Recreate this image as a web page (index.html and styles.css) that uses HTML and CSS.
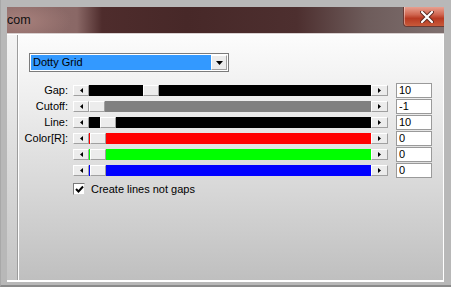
FILE: index.html
```html
<!DOCTYPE html>
<html lang="en">
<head>
    <meta charset="UTF-8">
    <title>Dotty Grid</title>
    <link rel="stylesheet" href="styles.css">
</head>
<body>
    <div class="window">
        <div class="titlebar">
            <span class="title">com</span>
            <div class="close-btn">
                <svg width="14" height="12" viewBox="0 0 14 12">
                    <path d="M2 1 L12 11 M12 1 L2 11" stroke="#5a2a20" stroke-width="4" stroke-linecap="round"/>
                    <path d="M2 1 L12 11 M12 1 L2 11" stroke="#fff" stroke-width="2.2" stroke-linecap="round"/>
                </svg>
            </div>
        </div>
        <div class="client">
            <div class="side-strip"></div>
            <div class="panel">
                <div class="combo">
                    <span class="combo-text">Dotty Grid</span>
                    <span class="combo-arrow">
                        <svg width="7" height="4" viewBox="0 0 7 4"><polygon points="0,0 7,0 3.5,4" fill="#000"/></svg>
                    </span>
                </div>

                <div class="rows">
                    <div class="row">
                        <span class="row-label">Gap:</span>
                        <div class="scrollbar">
                            <span class="sb-btn sb-left"><svg width="3" height="5" viewBox="0 0 3 5"><polygon points="3,0 3,5 0,2.5" fill="#000"/></svg></span>
                            <div class="sb-track black">
                                <span class="sb-before" style="width: 54px"></span>
                                <span class="sb-thumb"></span>
                            </div>
                            <span class="sb-btn sb-right"><svg width="3" height="5" viewBox="0 0 3 5"><polygon points="0,0 0,5 3,2.5" fill="#000"/></svg></span>
                        </div>
                        <input class="value-box" type="text" value="10">
                    </div>
                    <div class="row">
                        <span class="row-label">Cutoff:</span>
                        <div class="scrollbar">
                            <span class="sb-btn sb-left"><svg width="3" height="5" viewBox="0 0 3 5"><polygon points="3,0 3,5 0,2.5" fill="#000"/></svg></span>
                            <div class="sb-track grey">
                                <span class="sb-before" style="width: 0px"></span>
                                <span class="sb-thumb"></span>
                            </div>
                            <span class="sb-btn sb-right"><svg width="3" height="5" viewBox="0 0 3 5"><polygon points="0,0 0,5 3,2.5" fill="#000"/></svg></span>
                        </div>
                        <input class="value-box" type="text" value="-1">
                    </div>
                    <div class="row">
                        <span class="row-label">Line:</span>
                        <div class="scrollbar">
                            <span class="sb-btn sb-left"><svg width="3" height="5" viewBox="0 0 3 5"><polygon points="3,0 3,5 0,2.5" fill="#000"/></svg></span>
                            <div class="sb-track black">
                                <span class="sb-before" style="width: 11px"></span>
                                <span class="sb-thumb"></span>
                            </div>
                            <span class="sb-btn sb-right"><svg width="3" height="5" viewBox="0 0 3 5"><polygon points="0,0 0,5 3,2.5" fill="#000"/></svg></span>
                        </div>
                        <input class="value-box" type="text" value="10">
                    </div>
                    <div class="row">
                        <span class="row-label">Color[R]:</span>
                        <div class="scrollbar">
                            <span class="sb-btn sb-left"><svg width="3" height="5" viewBox="0 0 3 5"><polygon points="3,0 3,5 0,2.5" fill="#000"/></svg></span>
                            <div class="sb-track red">
                                <span class="sb-before" style="width: 1px"></span>
                                <span class="sb-thumb"></span>
                            </div>
                            <span class="sb-btn sb-right"><svg width="3" height="5" viewBox="0 0 3 5"><polygon points="0,0 0,5 3,2.5" fill="#000"/></svg></span>
                        </div>
                        <input class="value-box" type="text" value="0">
                    </div>
                    <div class="row">
                        <span class="row-label"></span>
                        <div class="scrollbar">
                            <span class="sb-btn sb-left"><svg width="3" height="5" viewBox="0 0 3 5"><polygon points="3,0 3,5 0,2.5" fill="#000"/></svg></span>
                            <div class="sb-track green">
                                <span class="sb-before" style="width: 1px"></span>
                                <span class="sb-thumb"></span>
                            </div>
                            <span class="sb-btn sb-right"><svg width="3" height="5" viewBox="0 0 3 5"><polygon points="0,0 0,5 3,2.5" fill="#000"/></svg></span>
                        </div>
                        <input class="value-box" type="text" value="0">
                    </div>
                    <div class="row">
                        <span class="row-label"></span>
                        <div class="scrollbar">
                            <span class="sb-btn sb-left"><svg width="3" height="5" viewBox="0 0 3 5"><polygon points="3,0 3,5 0,2.5" fill="#000"/></svg></span>
                            <div class="sb-track blue">
                                <span class="sb-before" style="width: 1px"></span>
                                <span class="sb-thumb"></span>
                            </div>
                            <span class="sb-btn sb-right"><svg width="3" height="5" viewBox="0 0 3 5"><polygon points="0,0 0,5 3,2.5" fill="#000"/></svg></span>
                        </div>
                        <input class="value-box" type="text" value="0">
                    </div>
                </div>

                <div class="check-row">
                    <span class="check-box">
                        <svg width="9" height="9" viewBox="0 0 9 9"><path d="M1 4 L3.5 6.5 L8 1.5" stroke="#000" stroke-width="2" fill="none"/></svg>
                    </span>
                    <span class="check-label">Create lines not gaps</span>
                </div>
            </div>
        </div>
    </div>
</body>
</html>
```

FILE: styles.css
```css
* {
    margin: 0;
    padding: 0;
    box-sizing: border-box;
}

body {
    width: 451px;
    height: 287px;
    overflow: hidden;
    font-family: "Liberation Sans", Arial, sans-serif;
    font-size: 11px;
    color: #000;
}

.window {
    width: 451px;
    height: 287px;
    background: #b8b8b8;
    border-left: 1px solid #a8a8a8;
    border-bottom: 2px solid #8a8a8a;
    padding: 7px 7px 3px 6px;
    display: flex;
    flex-direction: column;
}

/* title bar */
.titlebar {
    height: 27px;
    display: flex;
    align-items: flex-start;
    justify-content: space-between;
    background:
        radial-gradient(ellipse 50px 22px at 14px 14px, rgba(170, 130, 125, 0.9), rgba(170, 130, 125, 0) 100%),
        linear-gradient(to right, #8c6b69 0px, #8a6866 70px, #4e2c2c 95px, #472828 180px, #4d2f2f 290px, #6e5c5b 360px, #7d6e6d 430px);
    border-bottom: 1px solid #d8d0d0;
    overflow: hidden;
}
.title {
    font-size: 12.5px;
    color: #111;
    line-height: 27px;
    margin-left: 0px;
}
.close-btn {
    width: 42px;
    height: 20px;
    margin-right: -1px;
    border: 1px solid #6a3a34;
    border-top: none;
    border-right: none;
    border-radius: 0 0 0 4px;
    background: linear-gradient(to bottom, #e8a090 0%, #d06650 40%, #b83a22 60%, #c85a3a 100%);
    box-shadow: inset 1px 0 0 rgba(255, 255, 255, 0.4);
    display: flex;
    align-items: center;
    justify-content: center;
    padding-left: 4px;
}

/* client area */
.client {
    flex: 1;
    display: flex;
    border-top: 1px solid #fff;
    border-right: 1px solid #fff;
    border-bottom: 2px solid #fff;
}
.side-strip {
    width: 11px;
    background: linear-gradient(to bottom, #f4f4f4, #c4c4c4);
    border-right: 1px solid #9c9c9c;
}
.panel {
    flex: 1;
    border-left: 1px solid #fff;
    background: linear-gradient(to bottom, #fcfcfc 0%, #ececec 30%, #d6d6d6 65%, #bfbfbf 100%);
    padding: 18px 0 0 0;
    display: flex;
    flex-direction: column;
}

/* combo box */
.combo {
    width: 200px;
    height: 19px;
    margin-left: 10px;
    border: 1px solid #7b7b7b;
    background: #fff;
    display: flex;
    padding: 1px;
}
.combo-text {
    flex: 1;
    background: #3399ff;
    color: #000;
    padding-left: 2px;
    line-height: 15px;
    font-size: 11px;
}
.combo-arrow {
    width: 16px;
    background: #ececec;
    border-top: 1px solid #fff;
    border-left: 1px solid #fff;
    border-right: 1px solid #a0a0a0;
    border-bottom: 1px solid #a0a0a0;
    display: flex;
    align-items: center;
    justify-content: center;
}

/* slider rows */
.rows {
    margin-top: 10px;
    display: flex;
    flex-direction: column;
}
.row {
    height: 16px;
    display: flex;
    align-items: center;
}
.row-label {
    width: 49px;
    text-align: right;
    margin-right: 5px;
    line-height: 14px;
}
.scrollbar {
    width: 315px;
    height: 11px;
    display: flex;
}
.sb-btn {
    width: 16px;
    height: 11px;
    background: #ececec;
    border-top: 1px solid #fff;
    border-left: 1px solid #fff;
    border-right: 1px solid #a0a0a0;
    border-bottom: 1px solid #a0a0a0;
    display: flex;
    align-items: center;
    justify-content: center;
}
.sb-right {
    width: 17px;
}
.sb-track {
    flex: 1;
    display: flex;
}
.sb-before {
    background: #000;
}
.sb-thumb {
    width: 16px;
    background: #ececec;
    border-top: 1px solid #fff;
    border-left: 1px solid #fff;
    border-right: 1px solid #a0a0a0;
    border-bottom: 1px solid #a0a0a0;
}
.black { background: #000; }
.grey { background: #808080; }
.red { background: #ff0000; }
.red .sb-before { background: #ff0000; }
.green { background: #00ff00; }
.green .sb-before { background: #00ff00; }
.blue { background: #0000ff; }
.blue .sb-before { background: #0000ff; }

.value-box {
    width: 36px;
    height: 15px;
    margin-left: 8px;
    border: 1px solid #9a9a9a;
    background: #fff;
    font-family: "Liberation Sans", Arial, sans-serif;
    font-size: 11px;
    padding-left: 2px;
    line-height: 13px;
    color: #000;
    outline: none;
}

/* checkbox */
.check-row {
    margin-top: 5px;
    margin-left: 54px;
    display: flex;
    align-items: center;
    height: 12px;
}
.check-box {
    width: 12px;
    height: 12px;
    background: #fff;
    border-top: 1px solid #7a7a7a;
    border-left: 1px solid #7a7a7a;
    border-right: 1px solid #d8d8d8;
    border-bottom: 1px solid #d8d8d8;
    display: flex;
    align-items: center;
    justify-content: center;
}
.check-label {
    margin-left: 6px;
}
```
